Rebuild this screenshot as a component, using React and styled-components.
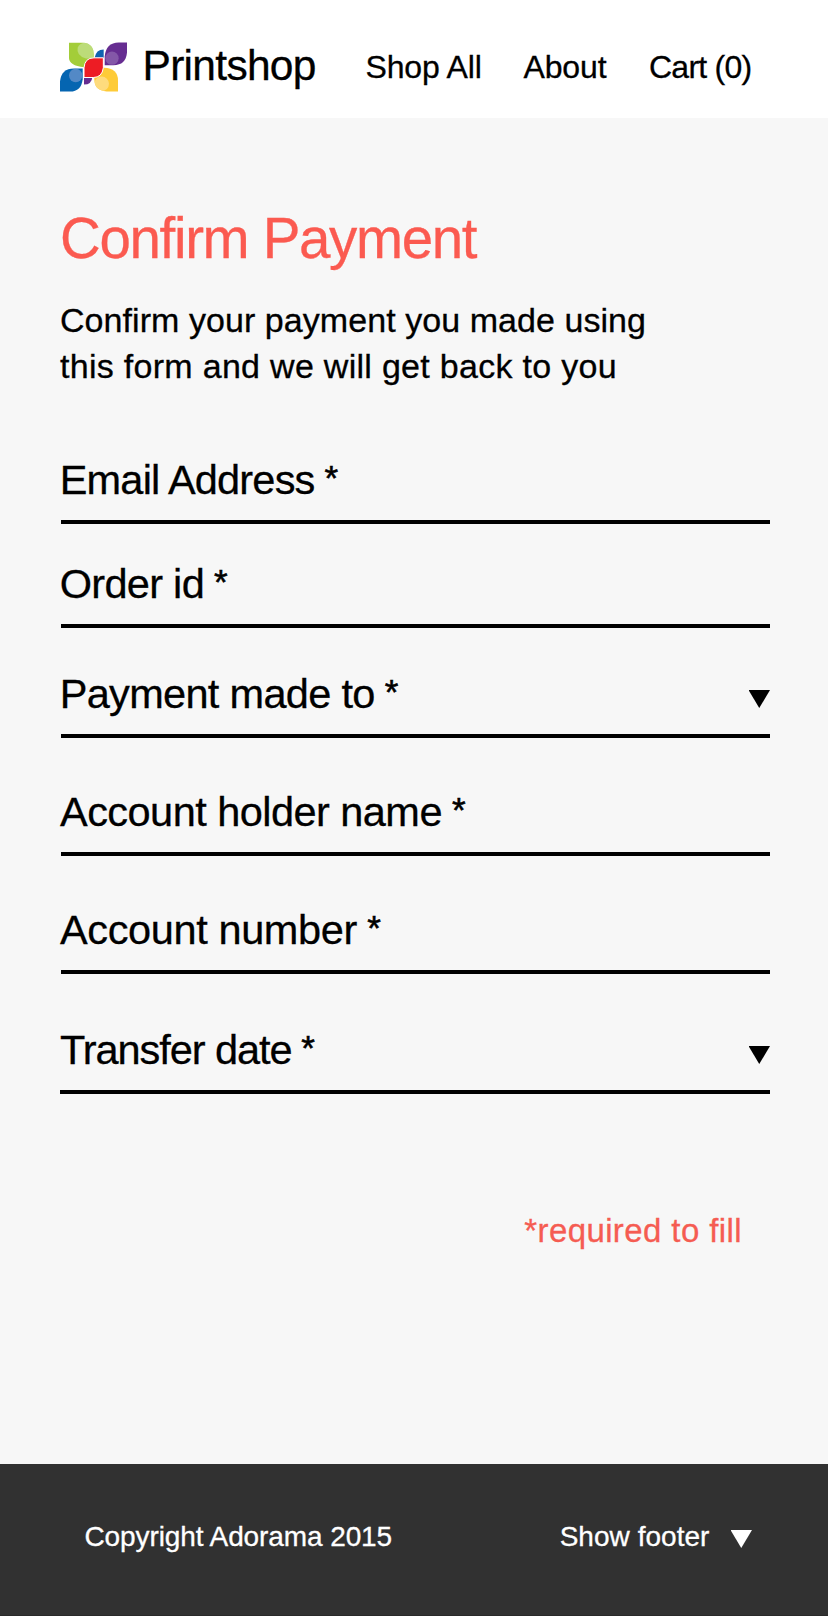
import React from "react";
import styled, { createGlobalStyle } from "styled-components";

const Global = createGlobalStyle`
  *, *::before, *::after { box-sizing: border-box; }
  body {
    margin: 0;
    background: #f7f7f7;
    color: #000;
    font-family: "Liberation Sans", Arial, sans-serif;
    -webkit-text-stroke: 0.3px currentColor;
  }
  h1, p { margin: 0; font-weight: 400; }
  a { color: inherit; text-decoration: none; }
`;

const Page = styled.div`
  display: flex;
  flex-direction: column;
  width: 828px;
  height: 1616px;
  overflow: hidden;
`;

const Header = styled.header`
  display: flex;
  align-items: flex-start;
  height: 118px;
  padding-left: 60px;
  background: #fff;
`;

const Logo = styled.svg`
  width: 69px;
  height: 51px;
  margin-top: 41.5px;
  flex: none;
`;

const Brand = styled.a`
  width: 223px;
  margin: 42px 0 0 13.5px;
  font-size: 42.5px;
  line-height: 48px;
  letter-spacing: -0.7px;
  white-space: nowrap;
`;

const Nav = styled.nav`
  display: flex;
  margin-top: 49px;
`;

const NavLink = styled.a`
  width: ${(p) => p.$width}px;
  font-size: 32px;
  line-height: 36px;
  letter-spacing: ${(p) => p.$track}px;
  white-space: nowrap;
`;

const Main = styled.main`
  flex: 1;
  padding: 89px 58px 0 60px;
`;

const Title = styled.h1`
  font-size: 56.5px;
  line-height: 64px;
  letter-spacing: -1.35px;
  color: #fb5a50;
`;

const Intro = styled.p`
  margin-top: 26px;
  font-size: 34px;
  line-height: 46px;
`;

const IntroLine = styled.span`
  display: block;
  letter-spacing: ${(p) => p.$track}px;
  white-space: nowrap;
`;

const Form = styled.form`
  display: flex;
  flex-direction: column;
  padding-top: 63px;
`;

const Field = styled.label`
  display: flex;
  justify-content: space-between;
  align-items: flex-start;
  height: ${(p) => p.$height}px;
  margin-left: ${(p) => (p.$wide ? 0 : 1)}px;
  border-bottom: 4px solid #000;
  padding-top: ${(p) => p.$height - 68}px;
`;

const FieldName = styled.span`
  margin-left: ${(p) => p.$shift}px;
  font-size: 41.5px;
  line-height: 48px;
  letter-spacing: ${(p) => p.$track}px;
  white-space: nowrap;
`;

const Star = styled.span`
  margin-left: 1px;
  font-size: 35px;
  line-height: 0;
  vertical-align: 4px;
  -webkit-text-stroke-width: 0.6px;
`;

const Arrow = styled.span`
  width: 21.5px;
  height: 18px;
  margin-top: 20px;
  background: currentColor;
  clip-path: polygon(0 0, 100% 0, 50% 100%);
`;

const Required = styled.p`
  margin: 118px 28px 0 0;
  text-align: right;
  font-size: 33px;
  line-height: 38px;
  letter-spacing: 0.4px;
  color: #f55c52;
`;

const Footer = styled.footer`
  display: flex;
  justify-content: space-between;
  align-items: flex-start;
  height: 152px;
  padding: 57px 76px 0 84.5px;
  border-bottom: 1px solid #292929;
  background: #313131;
  color: #fff;
  font-size: 28px;
  line-height: 32px;
  letter-spacing: -0.1px;
`;

const FooterToggle = styled.div`
  display: flex;
  gap: 21px;
  letter-spacing: 0.04px;

  ${Arrow} { margin-top: 9px; }
`;

const fields = [
  { name: "Email Address", height: 72, shift: -1.3, track: -0.8 },
  { name: "Order id", height: 104, shift: -1.3, track: -0.7 },
  { name: "Payment made to", height: 110, shift: -1.3, track: -0.68, select: true },
  { name: "Account holder name", height: 118, shift: -1, track: -0.54 },
  { name: "Account number", height: 118, shift: -1, track: -0.38 },
  { name: "Transfer date", height: 120, shift: 0, track: -1.05, select: true, wide: true },
];

const GREEN = "M57 37H82Q104 39 104 62V110H102Q57 106 57 82Z";
const PURPLE = "M164 104V78Q168 36 206 36H231V66Q228 104 190 104Z";
const BLUE = "M30 183V153Q34 114 72 114H98V146Q94 183 60 183Z";
const YELLOW = "M133 112H162Q204 114 204 150V183H170Q133 180 133 148Z";

function PetalLogo() {
  return (
    <Logo viewBox="30 34.5 207 153" aria-label="Printshop">
      <defs>
        <clipPath id="petals">
          <path d={GREEN} />
          <path d={PURPLE} />
          <path d={BLUE} />
          <path d={YELLOW} />
        </clipPath>
      </defs>
      <path d="M57 37H100Q131 40 131 72V110H102Q57 106 57 82Z" fill="#a3cd39" />
      <path d="M83 52Q88 38 104 37Q131 42 131 72V80Q118 85 108 84Q78 76 83 52Z" fill="#bcdc79" />
      <path d="M134 82Q138 57 161 57V82Z" fill="#0f63b0" />
      <path d={PURPLE} fill="#662d91" />
      <path d="M102 140H127Q125 162 102 162Z" fill="#662d91" />
      <path d={BLUE} fill="#0565b1" />
      <path d={YELLOW} fill="#fecb38" />
      <g clipPath="url(#petals)">
        <circle cx="186" cy="83" r="20" fill="#8457a8" />
        <circle cx="77" cy="135" r="20" fill="#5389c6" />
        <circle cx="155" cy="160" r="22" fill="#fedb7d" />
      </g>
      <path d="M102 141V112Q104 82 132 82H160V112Q156 141 130 141Z" fill="#ed1c24" stroke="#fff" strokeWidth="3" />
    </Logo>
  );
}

export default function App() {
  return (
    <Page>
      <Global />
      <Header>
        <PetalLogo />
        <Brand href="#">Printshop</Brand>
        <Nav>
          <NavLink href="#" $width={158} $track={-0.15}>Shop All</NavLink>
          <NavLink href="#" $width={125.5} $track={-0.15}>About</NavLink>
          <NavLink href="#" $width={110} $track={-0.75}>Cart (0)</NavLink>
        </Nav>
      </Header>
      <Main>
        <Title>Confirm Payment</Title>
        <Intro>
          <IntroLine $track={0.06}>Confirm your payment you made using</IntroLine>
          <IntroLine $track={0.29}>this form and we will get back to you</IntroLine>
        </Intro>
        <Form>
          {fields.map((f) => (
            <Field key={f.name} $height={f.height} $wide={f.wide}>
              <FieldName $shift={f.shift} $track={f.track}>
                {f.name}
                <Star> *</Star>
              </FieldName>
              {f.select && <Arrow />}
            </Field>
          ))}
        </Form>
        <Required>*required to fill</Required>
      </Main>
      <Footer>
        <span>Copyright Adorama 2015</span>
        <FooterToggle>
          <span>Show footer</span>
          <Arrow />
        </FooterToggle>
      </Footer>
    </Page>
  );
}
